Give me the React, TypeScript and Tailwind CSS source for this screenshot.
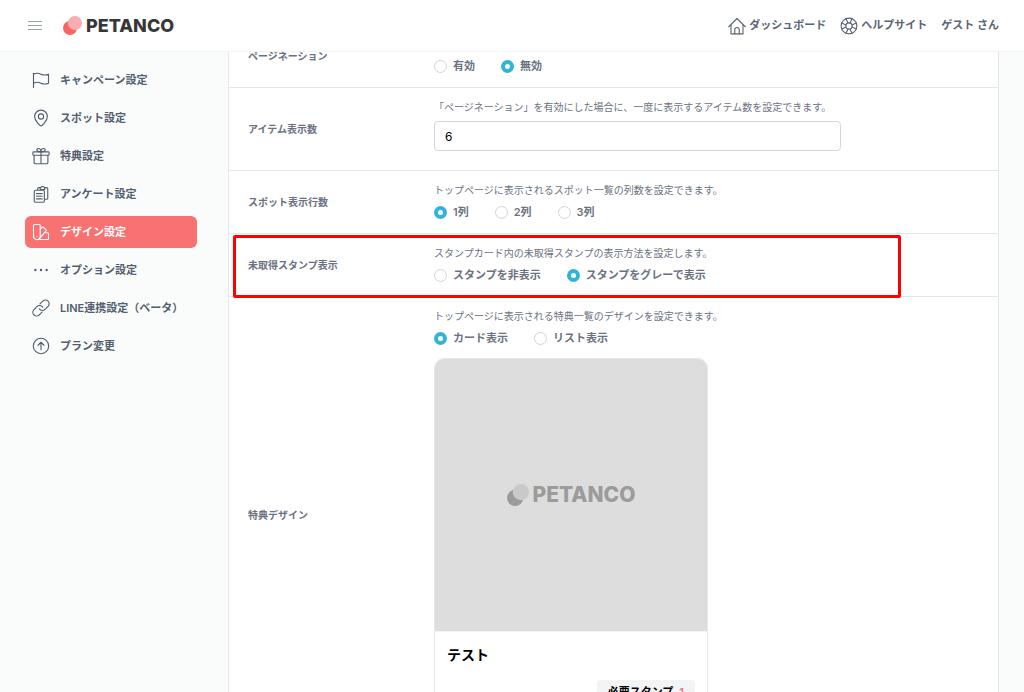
import { useState, type ReactNode } from 'react';

type IconName = 'flag' | 'pin' | 'gift' | 'survey' | 'design' | 'dots' | 'link' | 'plan' | 'home' | 'help';

const iconShapes: Record<IconName, ReactNode> = {
  flag: (
    <>
      <path d="M2 22V3" />
      <path d="M2 4.2c3.300-1.600 6.500-1.600 10 0s6.700 1.600 10 0v12c-3.300 1.600-6.500 1.600-10 0s-6.700-1.600-10 0" />
    </>
  ),
  pin: (
    <>
      <path d="M12 22.500c-1 0-8.500-6.500-8.500-12.500a8.500 8.500 0 0 1 17 0c0 6-7.500 12.500-8.500 12.500z" />
      <circle cx="12" cy="10" r="3.500" />
    </>
  ),
  gift: (
    <>
      <rect x="1.200" y="6.500" width="21.600" height="4.500" rx="1" />
      <path d="M2.800 11v9.500a1.800 1.800 0 0 0 1.800 1.800h14.800a1.800 1.800 0 0 0 1.800-1.800V11M12 6.500v15.800" />
      <path d="M12 6.500C8.500 6.500 6.500 5.500 6.500 3.800c0-2.600 5.500-3 5.500 2.700zM12 6.500c3.500 0 5.500-1 5.500-2.700 0-2.600-5.500-3-5.500 2.700z" />
    </>
  ),
  survey: (
    <>
      <path d="M7.500 6V5a1.500 1.500 0 0 1 1.500-1.500h2.500a2.800 2.800 0 0 1 5 0H19.500A1.500 1.500 0 0 1 21 5v12.500a1.500 1.500 0 0 1-1.500 1.500H17" />
      <path d="M11 3.500V6h6V3.500" />
      <rect x="3" y="7" width="13.500" height="16" rx="1.600" />
      <path d="M6 11.500h7.500M6 15h7.500M6 18.500h7.500" />
    </>
  ),
  design: (
    <>
      <path d="M2 3.500A1.500 1.500 0 0 1 3.500 2h6A1.500 1.500 0 0 1 11 3.500v14.200a4.500 4.500 0 0 1-9 0z" />
      <path d="M11 8.500l2.200-2.600a1.500 1.500 0 0 1 2.100-.1l3.200 3a1.500 1.500 0 0 1 .1 2.100L9.500 21" />
      <path d="M16.800 13h3.700a1.500 1.500 0 0 1 1.500 1.500v6a1.500 1.500 0 0 1-1.500 1.500H6.500" />
      <path d="M6.500 18.300v.1" />
    </>
  ),
  dots: (
    <g fill="currentColor" stroke="none">
      <circle cx="4.500" cy="12" r="1.600" />
      <circle cx="12" cy="12" r="1.600" />
      <circle cx="19.500" cy="12" r="1.600" />
    </g>
  ),
  link: (
    <>
      <path d="M9.700 13.200a5 5 0 0 0 7.700.7l4-4a5 5 0 0 0-7.100-7.100l-3.700 3.700" />
      <path d="M14.300 10.800a5 5 0 0 0-7.700-.7l-4 4a5 5 0 0 0 7.100 7.100l3.700-3.700" />
    </>
  ),
  plan: (
    <>
      <circle cx="12" cy="12" r="10.300" />
      <path d="M12 17V7.500M8 11l4-4 4 4" />
    </>
  ),
  home: (
    <>
      <path d="M1 13L12 2l11 11" />
      <path d="M4 10.500V22.500h16V10.500" />
      <path d="M9 22.500V17a3 3 0 0 1 6 0v5.500" />
    </>
  ),
  help: (
    <>
      <circle cx="12" cy="12" r="10.500" />
      <circle cx="12" cy="12" r="4.200" />
      <path d="M8 10.600L2.300 8M10.600 8L8 2.300M13.400 8L16 2.300M16 10.600L21.700 8M16 13.400l5.700 2.600M13.400 16l2.600 5.700M10.600 16L8 21.700M8 13.400L2.300 16" />
    </>
  ),
};

function Icon({ name }: { name: IconName }) {
  return (
    <svg
      viewBox="0 0 24 24"
      className="size-[18px] shrink-0"
      fill="none"
      stroke="currentColor"
      strokeWidth="1.500"
      strokeLinecap="round"
      strokeLinejoin="round"
      aria-hidden="true"
    >
      {iconShapes[name]}
    </svg>
  );
}

function LogoMark({ className, back, front }: { className: string; back: string; front: string }) {
  return (
    <svg viewBox="0 0 19 19" className={className} aria-hidden="true">
      <circle cx="7" cy="12" r="7" fill={back} />
      <circle cx="12" cy="7" r="7" fill={front} />
    </svg>
  );
}

const navItems: { icon: IconName; label: string; active?: boolean }[] = [
  { icon: 'flag', label: 'キャンペーン設定' },
  { icon: 'pin', label: 'スポット設定' },
  { icon: 'gift', label: '特典設定' },
  { icon: 'survey', label: 'アンケート設定' },
  { icon: 'design', label: 'デザイン設定', active: true },
  { icon: 'dots', label: 'オプション設定' },
  { icon: 'link', label: 'LINE連携設定（ベータ）' },
  { icon: 'plan', label: 'プラン変更' },
];

function RadioGroup({ name, label, options, initial }: { name: string; label: string; options: string[]; initial: string }) {
  const [value, setValue] = useState(initial);
  return (
    <div role="radiogroup" aria-label={label} className="flex h-4 items-center gap-[26px]">
      {options.map((option) => (
        <label key={option} className="flex items-center gap-1.5 text-[11px] leading-4 font-semibold">
          <input
            type="radio"
            name={name}
            value={option}
            checked={value === option}
            onChange={() => setValue(option)}
            className="size-[13px] appearance-none rounded-full border border-gray-300 bg-white checked:border-4 checked:border-[#31b5d6]"
          />
          {option}
        </label>
      ))}
    </div>
  );
}

function Row({ label, htmlFor, highlighted, children }: { label: string; htmlFor?: string; highlighted?: boolean; children: ReactNode }) {
  return (
    <div className="relative flex items-center border-t border-gray-200 px-[19px] py-[13px]">
      <div className="w-[186px] shrink-0 text-[10px] leading-3 font-bold">
        {htmlFor ? <label htmlFor={htmlFor}>{label}</label> : label}
      </div>
      <div className="flex min-w-0 flex-1 flex-col gap-2">{children}</div>
      {highlighted && (
        <div className="pointer-events-none absolute top-px right-[97px] -bottom-0.5 left-1 z-10 rounded-xs border-3 border-[#ff0000]" />
      )}
    </div>
  );
}

function Description({ children }: { children: ReactNode }) {
  return <p className="min-h-3 text-[10px] leading-3">{children}</p>;
}

export default function App() {
  const [count, setCount] = useState('6');
  return (
    <div className="flex h-screen flex-col overflow-hidden bg-[#fafcfb] font-['Inter','Noto_Sans_CJK_JP',sans-serif] text-gray-500">
      <header className="z-20 flex h-[52px] shrink-0 items-center justify-between border-b border-gray-100 bg-white pr-[25px] pl-7">
        <div className="flex items-center gap-[21px]">
          <button type="button" aria-label="メニュー" className="flex w-[14px] flex-col gap-[3px]">
            <span className="h-px w-full bg-gray-400" />
            <span className="h-px w-full bg-gray-400" />
            <span className="h-px w-full bg-gray-400" />
          </button>
          <a href="#top" className="flex items-center gap-1 text-[18px] leading-6 font-extrabold text-[#373737]">
            <LogoMark className="size-[19px]" back="#f76466" front="#faadb0" />
            PETANCO
          </a>
        </div>
        <nav className="flex items-center gap-[14px] text-[11px] font-semibold text-[#5b6575]">
          <a href="#dashboard" className="flex items-center gap-[3px]">
            <Icon name="home" />
            ダッシュボード
          </a>
          <a href="#help" className="flex items-center gap-[3px]">
            <Icon name="help" />
            ヘルプサイト
          </a>
          <span>ゲスト さん</span>
        </nav>
      </header>

      <div className="flex min-h-0 flex-1">
        <aside className="w-[228px] shrink-0 pt-3 pr-[31px] pl-[25px]">
          <nav className="flex flex-col gap-1.5">
            {navItems.map((item) => (
              <a
                key={item.label}
                href="#settings"
                aria-current={item.active ? 'page' : undefined}
                className={
                  item.active
                    ? 'flex h-8 items-center gap-[10px] rounded-md bg-[#f87272] px-[7px] text-[11px] font-semibold text-white'
                    : 'flex h-8 items-center gap-[10px] rounded-md px-[7px] text-[11px] font-semibold text-[#535e6e]'
                }
              >
                <Icon name={item.icon} />
                {item.label}
              </a>
            ))}
          </nav>
        </aside>

        <main className="mr-[25px] min-w-0 flex-1 overflow-hidden">
          <form className="-mt-7 border-x border-gray-200 bg-white">
            <Row label="ページネーション">
              <Description>{null}</Description>
              <RadioGroup name="pagination" label="ページネーション" options={['有効', '無効']} initial="無効" />
            </Row>
            <Row label="アイテム表示数" htmlFor="item-count">
              <Description>「ページネーション」を有効にした場合に、一度に表示するアイテム数を設定できます。</Description>
              <input
                id="item-count"
                type="text"
                value={count}
                onChange={(event) => setCount(event.target.value)}
                className="mb-1.5 h-[30px] w-full max-w-[407px] rounded-sm border border-gray-300 bg-white px-[10px] text-[12px] text-black"
              />
            </Row>
            <Row label="スポット表示行数">
              <Description>トップページに表示されるスポット一覧の列数を設定できます。</Description>
              <RadioGroup name="columns" label="スポット表示行数" options={['1列', '2列', '3列']} initial="1列" />
            </Row>
            <Row label="未取得スタンプ表示" highlighted>
              <Description>スタンプカード内の未取得スタンプの表示方法を設定します。</Description>
              <RadioGroup
                name="stamp"
                label="未取得スタンプ表示"
                options={['スタンプを非表示', 'スタンプをグレーで表示']}
                initial="スタンプをグレーで表示"
              />
            </Row>
            <Row label="特典デザイン">
              <Description>トップページに表示される特典一覧のデザインを設定できます。</Description>
              <RadioGroup name="reward" label="特典デザイン" options={['カード表示', 'リスト表示']} initial="カード表示" />
              <article className="mt-1 w-full max-w-[274px] overflow-hidden rounded-[10px] border border-gray-200 text-black">
                <div className="flex aspect-square items-center justify-center gap-1 bg-[#dddddd] text-[21px] leading-6 font-extrabold text-[#9b9b9b]">
                  <LogoMark className="size-[22px]" back="#9b9b9b" front="#c9c9c9" />
                  PETANCO
                </div>
                <div className="flex flex-col gap-[15px] border-t border-gray-100 px-3 pt-[13px] pb-[14px]">
                  <h3 className="text-[14px] leading-5 font-bold">テスト</h3>
                  <p className="flex gap-1.5 self-end rounded-sm bg-gray-100 px-[11px] text-[11px] leading-6 font-semibold">
                    必要スタンプ <span className="text-[#f87272]">1</span>
                  </p>
                </div>
              </article>
            </Row>
          </form>
        </main>
      </div>
    </div>
  );
}
